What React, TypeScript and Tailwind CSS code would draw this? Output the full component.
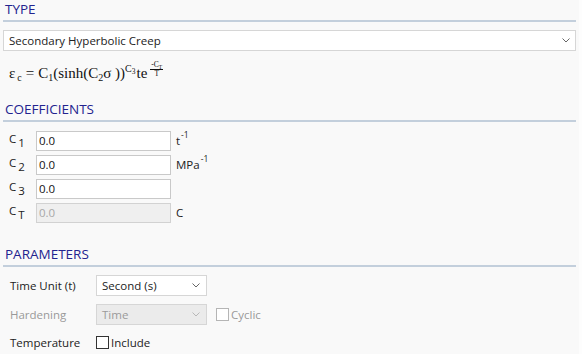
import React from 'react';

const FONT = { fontFamily: '"Segoe UI", "Open Sans", "Noto Sans", sans-serif' };
const MATH = { fontFamily: '"Liberation Serif", "DejaVu Serif", serif' };

function Chevron({ disabled }: { disabled?: boolean }) {
  return (
    <svg width="8" height="5" viewBox="0 0 8 5" className="shrink-0">
      <path d="M0.5 0.5 L4 4 L7.5 0.5" fill="none" stroke={disabled ? '#b8b8b8' : '#666666'} strokeWidth="1" />
    </svg>
  );
}

function Header({ title }: { title: string }) {
  return (
    <div className="h-[22px] flex flex-col">
      <div className="h-[20px] pl-[5px] text-[13.5px] leading-[19px] text-[#23238f]">{title}</div>
      <div className="h-[2px] mx-[3px] bg-[#c3cfdc]" />
    </div>
  );
}

function Coef({ sub, value, unit, sup, disabled }: { sub: string; value: string; unit?: string; sup?: string; disabled?: boolean }) {
  return (
    <div className="flex items-center h-[20px]">
      <div className="w-[36px] pl-[9px] flex items-start text-[#222] leading-none">
        <span className="text-[11.5px]">C</span>
        <span className="text-[11.5px] mt-[4px] ml-[2px]">{sub}</span>
      </div>
      <div
        className={`w-[135px] h-[20px] border flex items-center pl-[2px] text-[11.5px] ${
          disabled ? 'bg-[#efefef] border-[#d2d2d2] text-[#a8a8a8]' : 'bg-white border-[#c9c9c9] text-[#111]'
        }`}
      >
        {value}
      </div>
      {unit && (
        <div className="ml-[5px] text-[11.5px] text-[#222] flex items-start leading-none">
          <span>{unit}</span>
          {sup && <span className="text-[8.5px] mt-[-4px] ml-[1px]">{sup}</span>}
        </div>
      )}
    </div>
  );
}

function Check({ disabled }: { disabled?: boolean }) {
  return (
    <div className={`w-[13px] h-[13px] border bg-white ${disabled ? 'border-[#b5b5b5]' : 'border-[#333]'}`} />
  );
}

export default function App() {
  return (
    <div className="w-[582px] h-[354px] overflow-hidden bg-[#f9f9f9] border-r-[3px] border-r-[#fdfdfd]" style={FONT}>
      <Header title="TYPE" />

      <div className="mt-[8px] mx-[3px] h-[21px] bg-white border border-[#d6d6d6] flex items-center justify-between pl-[5px] pr-[5px] text-[11.5px] text-[#222]">
        <span>Secondary Hyperbolic Creep</span>
        <Chevron />
      </div>

      {/* formula */}
      <div className="h-[49px] flex items-end pl-[9px] pb-[12px] text-[#111]" style={MATH}>
        <div className="flex items-baseline text-[15px] leading-none">
          <span>ε</span>
          <span className="text-[10px] relative top-[3px] ml-[2px]">c</span>
          <span className="mx-[4px]">=</span>
          <span>C</span>
          <span className="text-[10px] relative top-[3px]">1</span>
          <span>(sinh(C</span>
          <span className="text-[10px] relative top-[3px]">2</span>
          <span>σ ))</span>
          <span className="text-[10px] relative top-[-6px]">C</span>
          <span className="text-[7.5px] relative top-[-4px]">3</span>
          <span className="ml-[1px]">te</span>
          <span className="relative top-[-11px] ml-[3px] flex flex-col items-center text-[7.5px] leading-[7px]">
            <span className="border-b border-[#111] px-[1px]">
              -C<span className="text-[5.5px] relative top-[2px]">T</span>
            </span>
            <span>T</span>
          </span>
        </div>
      </div>

      <Header title="COEFFICIENTS" />

      <div className="mt-[9px] flex flex-col gap-[4px]">
        <Coef sub="1" value="0.0" unit="t" sup="-1" />
        <Coef sub="2" value="0.0" unit="MPa" sup="-1" />
        <Coef sub="3" value="0.0" />
        <Coef sub="T" value="0.0" unit="C" disabled />
      </div>

      <div className="mt-[22px]">
        <Header title="PARAMETERS" />
      </div>

      <div className="mt-[8px] flex flex-col text-[11.5px]">
        <div className="flex items-center h-[21px]">
          <div className="w-[96px] pl-[10px] text-[#222]">Time Unit (t)</div>
          <div className="w-[111px] h-[21px] bg-white border border-[#d6d6d6] flex items-center justify-between pl-[5px] pr-[6px] text-[#222]">
            <span>Second (s)</span>
            <Chevron />
          </div>
        </div>
        <div className="flex items-center h-[21px] mt-[8px]">
          <div className="w-[96px] pl-[10px] text-[#9a9a9a]">Hardening</div>
          <div className="w-[111px] h-[21px] bg-[#ebebeb] border border-[#d6d6d6] flex items-center justify-between pl-[5px] pr-[6px] text-[#9a9a9a]">
            <span>Time</span>
            <Chevron disabled />
          </div>
          <div className="ml-[9px] flex items-center gap-[2px] text-[#9a9a9a]">
            <Check disabled />
            <span>Cyclic</span>
          </div>
        </div>
        <div className="flex items-center h-[21px] mt-[7px]">
          <div className="w-[96px] pl-[10px] text-[#222]">Temperature</div>
          <div className="flex items-center gap-[2px] text-[#222]">
            <Check />
            <span>Include</span>
          </div>
        </div>
      </div>
    </div>
  );
}
